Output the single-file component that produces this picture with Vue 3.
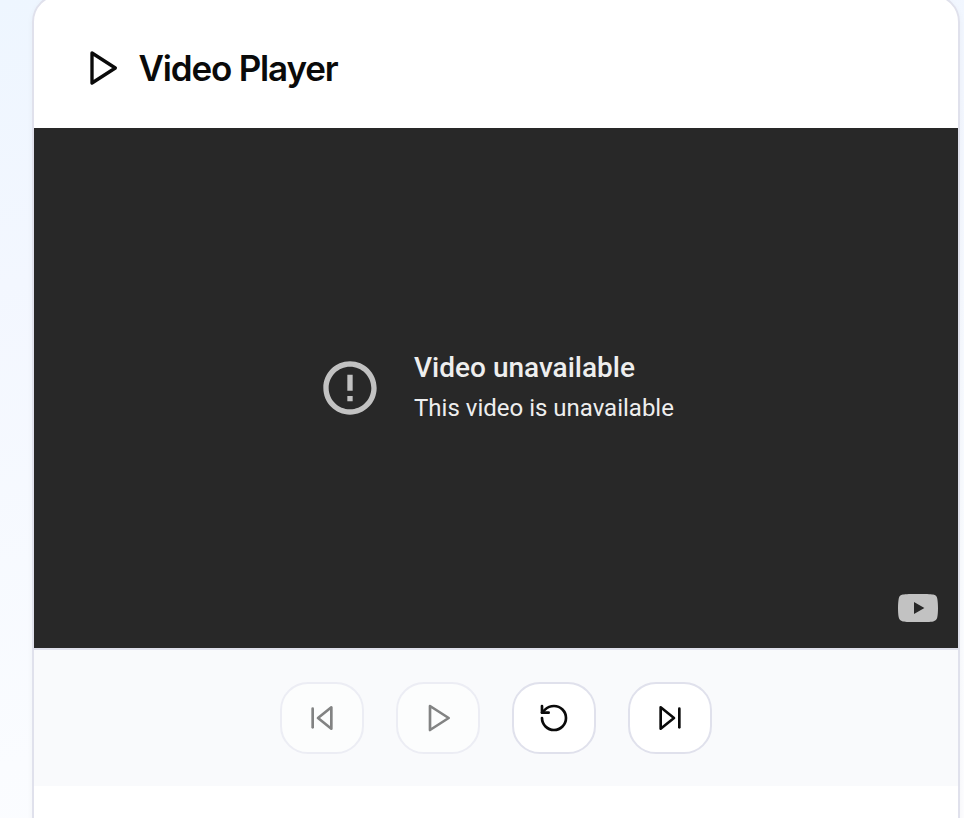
<script setup>
const controls = [
  { name: 'Previous', disabled: true, paths: ['M19 20 9 12l10-8v16Z', 'M5 19V5'] },
  { name: 'Play', disabled: true, paths: ['m6 3 14 9-14 9V3Z'] },
  { name: 'Restart', disabled: false, paths: ['M3 12a9 9 0 1 0 9-9 9.75 9.75 0 0 0-6.74 2.74L3 8', 'M3 3v5h5'] },
  { name: 'Next', disabled: false, paths: ['m5 4 10 8-10 8V4Z', 'M19 5v14'] },
]
</script>

<template>
  <div class="page">
    <section class="card">
      <header class="header">
        <svg class="title-icon line-icon" viewBox="0 0 24 24"><path d="m6 3 14 9-14 9V3Z" /></svg>
        <h1 class="title">Video Player</h1>
      </header>
      <div class="video">
        <div class="notice">
          <svg class="error-icon" viewBox="0 0 24 24">
            <path d="M11 15h2v2h-2zm0-8h2v6h-2zm.99-5C6.47 2 2 6.48 2 12s4.47 10 9.99 10C17.52 22 22 17.52 22 12S17.52 2 11.99 2zM12 20c-4.42 0-8-3.58-8-8s3.58-8 8-8 8 3.58 8 8-3.58 8-8 8z" />
          </svg>
          <div class="message">
            <div class="reason">Video unavailable</div>
            <div class="detail">This video is unavailable</div>
          </div>
        </div>
        <svg class="watermark" viewBox="0 0 40 28">
          <path fill-rule="evenodd" d="M20 0C13 0 7.500.1 4.800.6 2.500 1 1.100 2.400.7 4.700.2 7.500 0 10.500 0 14s.2 6.500.7 9.300c.4 2.300 1.800 3.700 4.100 4.100C7.500 27.900 13 28 20 28s12.500-.1 15.200-.6c2.300-.4 3.700-1.800 4.100-4.100.5-2.800.7-5.800.7-9.300s-.2-6.500-.7-9.300C38.900 2.400 37.500 1 35.200.6 32.500.1 27 0 20 0ZM16 8l10.400 6L16 20V8Z" />
        </svg>
      </div>
      <div class="controls">
        <button
          v-for="control in controls"
          :key="control.name"
          class="control"
          :disabled="control.disabled"
        >
          <svg class="control-icon line-icon" viewBox="0 0 24 24">
            <path v-for="d in control.paths" :key="d" :d="d" />
          </svg>
        </button>
      </div>
    </section>
  </div>
</template>

<style>
body {
  overflow: hidden;
}
</style>

<style scoped>
.page {
  box-sizing: border-box;
  height: 818px;
  padding: 0 4px 0 32px;
  overflow: hidden;
  background: linear-gradient(168deg, #eef6ff 0%, #f3f7ff 28%, #fafcff 75%, #fdfdff 100%);
}
.card {
  box-sizing: border-box;
  height: 900px;
  margin-top: -6px;
  border: 2px solid #e0e1ec;
  border-radius: 28px;
  background: #fff;
  box-shadow: 0 2px 6px rgba(15, 23, 42, 0.04);
}
.line-icon {
  display: block;
  fill: none;
  stroke: currentColor;
  stroke-width: 2;
  stroke-linecap: round;
  stroke-linejoin: round;
}
.header {
  display: flex;
  align-items: center;
  gap: 16.5px;
  box-sizing: border-box;
  height: 132px;
  padding: 12px 48px 0;
  color: #0a0a0a;
}
.title-icon {
  width: 40px;
  height: 40px;
}
.title {
  margin: 0;
  font: 600 35px/40px Inter, sans-serif;
  letter-spacing: -1.18px;
}
.video {
  position: relative;
  display: flex;
  align-items: center;
  justify-content: center;
  height: 520px;
  background: #282828;
}
.notice {
  display: flex;
  align-items: center;
  gap: 32px;
}
.error-icon {
  width: 64px;
  height: 64px;
  fill: #c2c2c2;
}
.message {
  color: #eee;
  font-family: Roboto, sans-serif;
  white-space: nowrap;
}
.reason {
  font-size: 28px;
  font-weight: 500;
  line-height: 40px;
}
.detail {
  font-size: 24px;
  line-height: 40px;
}
.watermark {
  position: absolute;
  right: 20px;
  bottom: 26px;
  width: 40px;
  height: 28px;
  fill: #c2c2c2;
}
.controls {
  display: flex;
  justify-content: center;
  gap: 32px;
  padding: 32px;
  border-top: 2px solid #e0e1ec;
  background: #f9fafc;
}
.control {
  display: flex;
  align-items: center;
  justify-content: center;
  box-sizing: border-box;
  width: 84px;
  height: 72px;
  padding: 0;
  border: 2px solid #e0e1ec;
  border-radius: 28px;
  background: #fff;
  color: #0a0a0a;
}
.control:disabled {
  border-color: #ecedf4;
  background: #fcfdfd;
  color: #828383;
}
.control-icon {
  width: 32px;
  height: 32px;
}
</style>
